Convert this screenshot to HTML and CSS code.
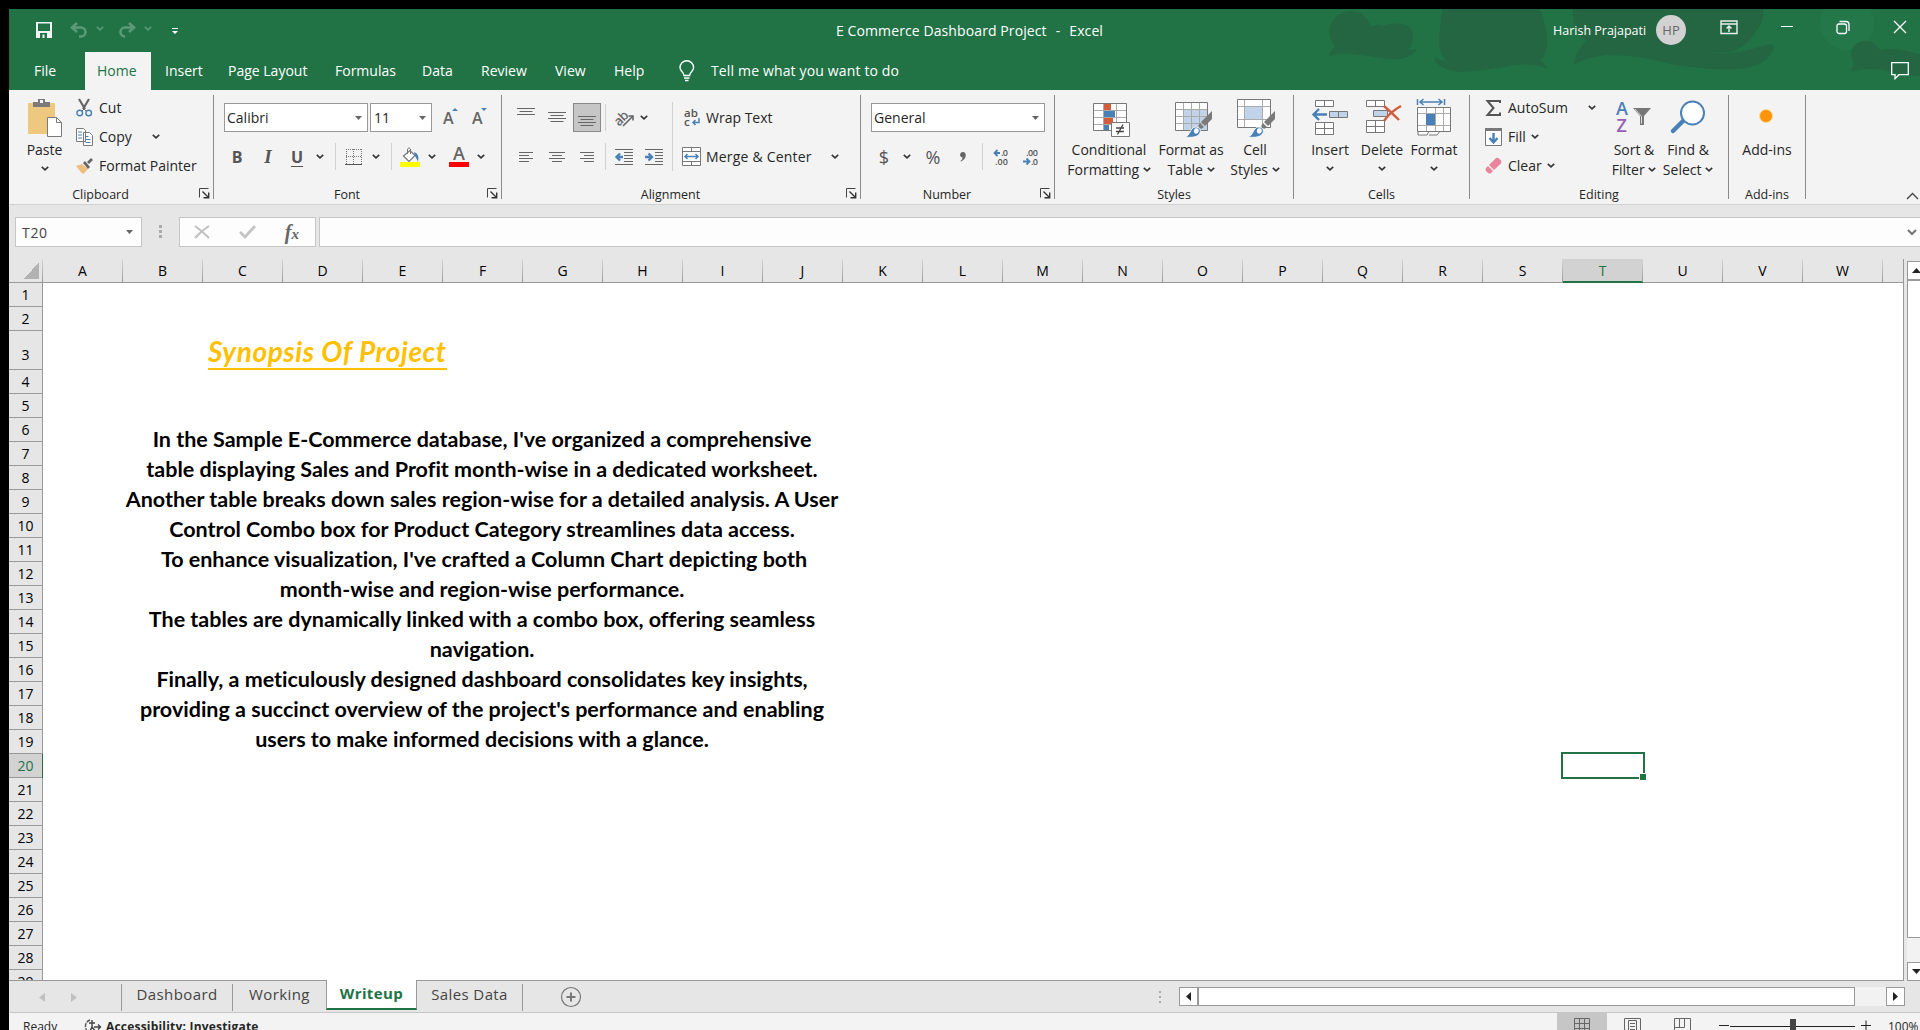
FILE: index.html
```html
<!DOCTYPE html>
<html lang="en">
<head>
<meta charset="utf-8">
<title>E Commerce Dashboard Project - Excel</title>
<link rel="stylesheet" href="styles.css">
</head>
<body>
<svg class="defs" width="0" height="0">
  <symbol id="chev" viewBox="0 0 8 5"><path d="M.8.8 4 3.8 7.2.8" fill="none" stroke="currentColor" stroke-width="1.6"/></symbol>
  <symbol id="tri" viewBox="0 0 7 4"><path d="M0 0h7L3.5 4z" fill="currentColor"/></symbol>
  <symbol id="launch" viewBox="0 0 11 11"><path d="M.5 9.500V.5H9.500" fill="none" stroke="#444"/><path d="M3.500 3.500 9 9M9.700 4.500v5.200H4.500" fill="none" stroke="#333" stroke-width="1.400"/></symbol>
  <symbol id="brush" viewBox="0 0 28 28"><path d="M28 1v8l-7 7-4-4z" fill="#7a7a7a"/><path d="M16 13l4 4-3 2-3-3z" fill="#7a7a7a"/><path d="M1 27c5-1 5-9 10-10 5 0 6 3 5 6-2 4-8 5-15 4z" fill="#4a80b8" stroke="#f3f3f3"/><path d="M11 18.500c3-1 4.500 1 3.500 3.500-1 2-3 2-4 1s-1-3 .5-4.500z" fill="#fff"/></symbol>
</svg>
<div class="app">
  <div class="top">
  <svg class="art" width="620" height="81" viewBox="0 0 620 81">
    <circle cx="547" cy="14" r="27" fill="#237749"/>
    <g fill="#246641">
      <path d="M29 48Q30 42 35 38Q24 22 34 10Q45-2 60 4Q68 9 71 18Q76 14 84 17Q95 12 106 16Q114 20 113 30Q112 37 108 41L117 40Q112 51 90 50L60 46Q38 42 29 48z"/>
      <path d="M142 0H240Q248 20 247 36Q246 46 240 52Q246 54 247 60Q236 54 215 56Q185 62 160 63Q137 60 134 49Q140 50 146 52Q136 40 140 20z"/>
      <path d="M273 0H463Q465 12 455 24Q447 38 430 43Q455 40 462 37Q474 33 474 38Q470 56 440 60Q410 62 370 55Q340 46 305 46Q285 49 274 56Q275 42 286 32Q275 25 273 10z"/>
      <path d="M551 63Q552 58 554 55Q548 42 556 35Q566 28 576 36L580 41Q594 38 606 42L620 45V67Q600 66 585 61Q565 58 551 63z"/>
    </g>
    <path d="M411 43q25 4 52-7" stroke="#23704a" fill="none"/>
  </svg>
  <header class="title-bar">
    <div class="qat">
      <svg width="16" height="16" viewBox="0 0 16 16"><path d="M0 0h16v16H0zM2 1.500V9h12V1.500zM4 11v5h2.500v-3.500h2V16H11v-5z" fill="#f0f5f2" fill-rule="evenodd"/></svg>
      <svg width="18" height="16" viewBox="0 0 18 16"><path d="M7 1 2 5.500 7 10M2 5.500h9a4.500 4.500 0 0 1 0 9H9" fill="none" stroke="#5c9a77" stroke-width="2.600"/></svg>
      <svg class="dim" width="8" height="5"><use href="#chev"/></svg>
      <svg width="18" height="16" viewBox="0 0 18 16"><path d="M11 1 16 5.500 11 10M16 5.500H7a4.500 4.500 0 0 0 0 9" fill="none" stroke="#5c9a77" stroke-width="2.600"/></svg>
      <svg class="dim" width="8" height="5"><use href="#chev"/></svg>
      <svg class="more" width="6" height="6" viewBox="0 0 6 6"><path d="M0 0h6v1H0zM0 3h6L3 6z" fill="#fff"/></svg>
    </div>
    <div class="doc-title"><span>E Commerce Dashboard Project&nbsp; <i>-</i>&nbsp; Excel</span></div>
    <div class="account"><span>Harish Prajapati</span></div>
    <div class="avatar">HP</div>
    <div class="win-controls">
      <svg width="18" height="15" viewBox="0 0 18 15" fill="none" stroke="#e8f2ec" stroke-width="1.400"><path d="M1 1h16v12.500H1zM1 4h16M9 12V6M6.500 8.500 9 6l2.500 2.500"/></svg>
      <svg width="12" height="15" viewBox="0 0 12 15"><path d="M0 6.500h12" stroke="#fff"/></svg>
      <svg width="14" height="15" viewBox="0 0 14 15" fill="none" stroke="#fff" stroke-width="1.300"><rect x="1" y="4" width="9.500" height="9.500" rx="2"/><path d="M3.500 1.500H10a3 3 0 0 1 3 3V11"/></svg>
      <svg width="14" height="15" viewBox="0 0 14 15"><path d="M1 1l12 12M13 1 1 13" stroke="#fff" stroke-width="1.300"/></svg>
    </div>
  </header>
  <nav class="tabs">
    <span>File</span><span class="active">Home</span><span>Insert</span><span>Page Layout</span><span>Formulas</span><span>Data</span><span>Review</span><span>View</span><span>Help</span>
    <svg width="16" height="22" viewBox="0 0 16 22" fill="none" stroke="#fff" stroke-width="1.400"><path d="M5 15.500C5 12 1 11.500 1 7.500a6.700 6.700 0 0 1 13.600 0c0 4-4 4.500-4 8zM5 18h5.500M6 20.500h3.500"/></svg>
    <span class="tell">Tell me what you want to do</span>
    <svg class="comment" width="18" height="18" viewBox="0 0 18 18"><path d="M.7.700h16.600v12H8l-4 4v-4H.7z" fill="none" stroke="#fff" stroke-width="1.300"/></svg>
  </nav>
  </div>

  <section class="ribbon">
    <div class="group clipboard">
      <div class="body">
        <div class="big">
          <svg width="36" height="40" viewBox="0 0 36 40"><rect x="1" y="5" width="27" height="31" rx="1" fill="#edc87e"/><path d="M6 4h5V1h7v3h5v5H6z" fill="#7a7a7a"/><rect x="13" y="2" width="3" height="3" fill="#f3f3f3"/><path d="M20.500 19.500h9l5 5v14h-14z" fill="#fff" stroke="#7a7a7a"/><path d="M29.500 19.500v5h5" fill="none" stroke="#7a7a7a"/></svg>
          <span>Paste</span>
          <svg class="chev solo" width="8" height="5"><use href="#chev"/></svg>
        </div>
        <div class="small-list">
          <div><svg width="17" height="18" viewBox="0 0 17 18"><path d="M3 0l6 10M13 0 7 10" stroke="#666" stroke-width="2.200"/><circle cx="3.700" cy="14" r="2.800" fill="none" stroke="#4a80b8" stroke-width="1.400"/><circle cx="12.700" cy="14" r="2.800" fill="none" stroke="#4a80b8" stroke-width="1.400"/><path d="M6 12l2-2 2 2" stroke="#666" fill="none"/></svg><span>Cut</span></div>
          <div><svg width="17" height="18" viewBox="0 0 17 18"><path d="M.5.500h7l2 2v11h-9zM7.500 4.500h6l3 3v10h-9z" fill="#fff" stroke="#7a7a7a"/><path d="M2 4h4M2 7h4M2 10h4M9.500 8.500h3M9.500 11.500h5M9.500 14.500h5" stroke="#4a80b8"/></svg><span>Copy</span><svg class="chev copy-chev" width="8" height="5"><use href="#chev"/></svg></div>
          <div><svg width="17" height="16" viewBox="0 0 17 16"><path d="M0 8l6-2 6 5-4 4.500-2 0z" fill="#edc080"/><path d="M7 5l2-2 5 6-2 2z" fill="#666"/><path d="M11 4l4-4 2 2-4 4z" fill="#666"/></svg><span>Format Painter</span></div>
        </div>
      </div>
      <div class="label"><span>Clipboard</span><svg width="11" height="11"><use href="#launch"/></svg></div>
    </div>

    <div class="group font">
      <div class="body rows">
        <div class="row1"><div class="combo name"><span>Calibri</span><svg width="7" height="4"><use href="#tri"/></svg></div><div class="combo size"><span>11</span><svg width="7" height="4"><use href="#tri"/></svg></div>
          <div class="grow"><span class="ga">A</span><svg width="6" height="3" viewBox="0 0 6 3"><path d="M0 3l3-3 3 3z" fill="#4a80b8"/></svg></div>
          <div class="grow shrink"><span class="ga">A</span><svg width="6" height="3" viewBox="0 0 6 3"><path d="M0 0h6L3 3z" fill="#4a80b8"/></svg></div></div>
        <div class="row2">
          <b class="glyph">B</b><i class="glyph it">I</i><b class="glyph un">U</b><svg class="chev" width="8" height="5"><use href="#chev"/></svg><i class="sep"></i>
          <svg width="18" height="18" viewBox="0 0 18 18"><path d="M1 1.500h16M1 8.500h16M1.500 1v16M8.500 1v16M16.500 1v16" stroke="#777" stroke-dasharray="1 1"/><path d="M0 16.500h17" stroke="#555"/></svg>
          <svg class="chev" width="8" height="5"><use href="#chev"/></svg><i class="sep"></i>
          <svg width="20" height="20" viewBox="0 0 20 20"><path d="M3.500 9 10 3.500l5 5-6 6z" fill="#fff" stroke="#777" stroke-width="1.200"/><path d="M7.500 7V2q1.500-2.500 3 0v5" fill="none" stroke="#777"/><path d="M14 5q6 2 4 9.500L15 9z" fill="#4a80b8"/><path d="M0 15h20v5H0z" fill="#ff0"/></svg>
          <svg class="chev" width="8" height="5"><use href="#chev"/></svg>
          <div class="fc">A</div>
          <svg class="chev" width="8" height="5"><use href="#chev"/></svg>
        </div>
      </div>
      <div class="label"><span>Font</span><svg width="11" height="11"><use href="#launch"/></svg></div>
    </div>

    <div class="group align">
      <div class="body">
        <div class="rows">
          <div class="row1 lines">
            <svg width="18" height="29"><path d="M0 5.500h18M2.500 8.500h13M0 11.500h18" /></svg>
            <svg width="18" height="29"><path d="M0 9.500h18M2.500 12.500h13M0 15.500h18M2.500 18.500h13"/></svg>
            <div class="pressed"><svg width="18" height="27"><path d="M0 12.500h18M2.500 15.500h13M0 18.500h18M2.500 21.500h13"/></svg></div>
            <i class="sep"></i>
            <svg width="20" height="20" viewBox="0 0 20 20"><text x="0" y="15" class="ab" transform="rotate(-45 7 11)">ab</text><path d="M9 18 18.500 8.500M14.500 8h4.500v4.500" style="stroke-width:1.600"/></svg>
            <svg class="chev" width="8" height="5"><use href="#chev"/></svg>
          </div>
          <div class="row2 lines">
            <svg width="14" height="12"><path d="M0 1.500h14M0 4.500h10M0 7.500h14M0 10.500h10"/></svg>
            <svg width="16" height="12"><path d="M0 1.500h16M3 4.500h10M0 7.500h16M3 10.500h10"/></svg>
            <svg width="14" height="12"><path d="M0 1.500h14M4 4.500h10M0 7.500h14M4 10.500h10"/></svg>
            <i class="sep"></i>
            <svg width="18" height="16"><path d="M0 .5h18M9 3.500h9M9 6.500h9M9 9.500h9M9 12.500h9M0 15.500h18"/><path d="M8 8H1.500M5 4.500 1.500 8 5 11.500" style="stroke:#4a80b8;stroke-width:2.400"/></svg>
            <svg width="18" height="16"><path d="M0 .5h18M10 3.500h8M10 6.500h8M10 9.500h8M10 12.500h8M0 15.500h18"/><path d="M0 8h6.500M3.500 4.500 7 8 3.500 11.500" style="stroke:#4a80b8;stroke-width:2.400"/></svg>
          </div>
        </div>
        <i class="tall-sep"></i>
        <div class="rows wrap">
          <div><svg width="19" height="19" viewBox="0 0 19 19"><text x="2" y="9" class="abc">ab</text><text x="2" y="18" class="abc">c</text><path d="M17 10v4.500H11M13.500 12 11 14.500l2.500 2.500" fill="none" stroke="#4a80b8" stroke-width="1.500"/></svg><span>Wrap Text</span></div>
          <div><svg width="19" height="19" viewBox="0 0 19 19"><path d="M.5.500h18v18H.5zM.5 4.500h18M.5 14.500h18M9.500.500v4M9.500 14.500v4" fill="#fff" stroke="#777"/><path d="M3 9.500h13M5.500 7 3 9.500 5.500 12M13.500 7 16 9.500 13.500 12" fill="none" stroke="#4a80b8" stroke-width="1.500"/></svg><span class="merge">Merge &amp; Center</span><svg class="chev mc" width="8" height="5"><use href="#chev"/></svg></div>
        </div>
      </div>
      <div class="label"><span>Alignment</span><svg width="11" height="11"><use href="#launch"/></svg></div>
    </div>

    <div class="group number">
      <div class="body rows">
        <div class="row1"><div class="combo fmt"><span>General</span><svg width="7" height="4"><use href="#tri"/></svg></div></div>
        <div class="row2">
          <span class="sym">$</span><svg class="chev" width="8" height="5"><use href="#chev"/></svg><span class="sym pct">%</span>
          <svg width="6" height="10" viewBox="0 0 6 10"><path d="M3 0c4 0 4 7-2 9.500L.5 9Q3 7 2.500 5.500C-1 5-.5 0 3 0z" fill="#666"/></svg><i class="sep"></i>
          <svg width="16" height="18" viewBox="0 0 16 18"><path d="M7 5H2M4.500 2 1.500 5l3 3" fill="none" stroke="#4a80b8" stroke-width="1.800"/><text x="8" y="8" class="dec" textLength="7">.0</text><text x="2" y="17" class="dec" textLength="13">.00</text></svg>
          <svg width="16" height="18" viewBox="0 0 16 18"><text x="3" y="8" class="dec" textLength="12">.00</text><text x="8" y="17" class="dec" textLength="7">.0</text><path d="M0 13.500h6M3.500 10.500l3 3-3 3" fill="none" stroke="#4a80b8" stroke-width="1.800"/></svg>
        </div>
      </div>
      <div class="label"><span>Number</span><svg width="11" height="11"><use href="#launch"/></svg></div>
    </div>

    <div class="group styles">
      <div class="body">
        <div class="big">
          <svg width="38" height="40" viewBox="0 0 38 40"><g transform="translate(3 0)"><path d="M.5 5.500h33v27H.5z" fill="#fff" stroke="#777"/><path d="M1 12.500h32M1 19.500h32M1 26.500h32M10.500 6v26M23.500 6v26" stroke="#aaa"/><path d="M11 6h7v6h-7zM11 20h9v6h-9z" fill="#d35c3c"/><path d="M11 13h11v6H11zM11 27h5v5h-5z" fill="#4a80b8"/><path d="M18.500 24.500h18v14h-18z" fill="#fff" stroke="#777"/><path d="M23 30h8M23 33.500h8M30 26.500l-5.500 10" stroke="#444" stroke-width="1.300"/></g></svg>
          <span>Conditional</span><span>Formatting <svg class="chev" width="8" height="5"><use href="#chev"/></svg></span>
        </div>
        <div class="big">
          <svg width="38" height="40" viewBox="0 0 38 40"><g transform="translate(2 0)"><path d="M1.500 4.500h32v28h-32z" fill="#fff" stroke="#777"/><path d="M9 11h24v21H9z" fill="#c0d3e9"/><path d="M2 11.500h31M2 18.500h31M2 25.500h31M9.500 5v27M17.500 5v27M25.500 5v27" stroke="#aaa"/><use href="#brush" x="10" y="12" width="28" height="28"/></g></svg>
          <span>Format as</span><span>Table <svg class="chev" width="8" height="5"><use href="#chev"/></svg></span>
        </div>
        <div class="big">
          <svg width="38" height="40" viewBox="0 0 38 40"><g transform="translate(1 0)"><path d="M.5 1.500h33v28H.5z" fill="#fff" stroke="#777"/><path d="M8 9h17v12H8z" fill="#c0d3e9"/><path d="M1 8.500h32M1 21.500h32M7.500 2v27M25.500 2v27" stroke="#aaa"/><use href="#brush" x="10" y="12" width="28" height="28"/></g></svg>
          <span>Cell</span><span>Styles <svg class="chev" width="8" height="5"><use href="#chev"/></svg></span>
        </div>
      </div>
      <div class="label"><span>Styles</span></div>
    </div>

    <div class="group cells">
      <div class="body">
        <div class="big">
          <svg width="38" height="40" viewBox="0 0 38 40"><path d="M4.500 2.500h18v6h-18zM13.500 2.500v6M4.500 24.500h18v12h-18zM13.500 24.500v12M4.500 30.500h18" fill="#fff" stroke="#777"/><path d="M18.500 13.500h18v6h-18zM27.500 13.500v6" fill="#c0d3e9" stroke="#777"/><path d="M16 16.500H3M8 11 2.500 16.500 8 22" fill="none" stroke="#4a80b8" stroke-width="2.400"/></svg>
          <span>Insert</span><svg class="chev solo" width="8" height="5"><use href="#chev"/></svg>
        </div>
        <div class="big">
          <svg width="38" height="40" viewBox="0 0 38 40"><path d="M3.500 2.500h18v6h-18zM12.500 2.500v6M3.500 22.500h18v12h-18zM12.500 22.500v12M3.500 28.500h18" fill="#fff" stroke="#777"/><path d="M10.500 12.500h14v6h-14z" fill="#c0d3e9" stroke="#777"/><path d="M21 8q8 7 15 14M38 8Q27 14 21 23" fill="none" stroke="#d35c3c" stroke-width="2.400"/></svg>
          <span>Delete</span><svg class="chev solo" width="8" height="5"><use href="#chev"/></svg>
        </div>
        <div class="big">
          <svg width="38" height="40" viewBox="0 0 38 40"><path d="M2.500 9.500h33v24h-33zM3 33v4h9l2-4M14 37h8l3-4" fill="#fff" stroke="#777"/><path d="M3 15.500h32M3 27.500h32M11.500 10v23M20.500 10v23M28.500 10v23" stroke="#aaa"/><path d="M11 16h9v11h-9z" fill="#4a80b8"/><path d="M2.500 1v6M29.500 1v6M5 4h22M8.500 1 5 4l3.500 3M23.500 1 27 4l-3.500 3" fill="none" stroke="#4a80b8" stroke-width="1.500"/></svg>
          <span>Format</span><svg class="chev solo" width="8" height="5"><use href="#chev"/></svg>
        </div>
      </div>
      <div class="label"><span>Cells</span></div>
    </div>

    <div class="group editing">
      <div class="body">
        <div class="small-list">
          <div><svg width="17" height="18" viewBox="0 0 17 18"><path d="M15 4V2H2.500l6 7-6 7H15v-2.500" fill="none" stroke="#555" stroke-width="2"/></svg><span>AutoSum</span><svg class="chev sum-chev" width="8" height="5"><use href="#chev"/></svg></div>
          <div><svg width="17" height="18" viewBox="0 0 17 18"><path d="M.5.500h16v17H.5z" fill="#fff" stroke="#777"/><path d="M0 0h17v3H0z" fill="#777"/><path d="M8.500 5v9M4.500 10l4 4.500 4-4.500" fill="none" stroke="#4a80b8" stroke-width="2.400"/></svg><span>Fill</span><svg class="chev near" width="8" height="5"><use href="#chev"/></svg></div>
          <div><svg width="17" height="17" viewBox="0 0 17 17"><path d="M11 1q2-1 3.500 1l1.500 1.500q1 1.500 0 3l-7 6.500-5-5z" fill="#e8859a"/><path d="M3 9l5 5-2 2q-1.500 1-3 0l-2-2q-1-1.500 0-3z" fill="#e8859a"/></svg><span>Clear</span><svg class="chev near" width="8" height="5"><use href="#chev"/></svg></div>
        </div>
        <div class="big">
          <svg width="38" height="40" viewBox="0 0 38 40"><text x="1" y="17" class="az" fill="#4a80b8">A</text><text x="1.500" y="34" class="az" fill="#9560b5">Z</text><path d="M18 10h18l-7 8v9h-4v-9z" fill="#777"/><path d="M20 11l6.500 7.500v7" fill="none" stroke="#ddd"/></svg>
          <span>Sort &amp;</span><span>Filter <svg class="chev" width="8" height="5"><use href="#chev"/></svg></span>
        </div>
        <div class="big">
          <svg width="38" height="40" viewBox="0 0 38 40"><path d="M15 22 4 33" stroke="#4a80b8" stroke-width="4.500" stroke-linecap="round"/><circle cx="23.500" cy="15" r="11.500" fill="#fff" stroke="#4a80b8" stroke-width="2"/></svg>
          <span>Find &amp;</span><span>Select <svg class="chev" width="8" height="5"><use href="#chev"/></svg></span>
        </div>
      </div>
      <div class="label"><span>Editing</span></div>
    </div>

    <div class="group addins">
      <div class="body"><div class="big"><svg width="38" height="40" viewBox="0 0 38 40"><circle cx="18" cy="18" r="6.500" fill="#ff9408" stroke="#fbd9a6"/></svg><span>Add-ins</span></div></div>
      <div class="label"><span>Add-ins</span></div>
    </div>
    <svg class="collapse" width="13" height="8" viewBox="0 0 13 8"><path d="M1 7l5.500-5.500L12 7" fill="none" stroke="#444" stroke-width="1.400"/></svg>
  </section>

  <section class="formula-bar">
    <div class="name-box"><span>T20</span><svg width="7" height="4"><use href="#tri"/></svg></div>
    <svg class="dots" width="3" height="14"><path d="M0 0h3v3H0zM0 5h3v3H0zM0 10h3v3H0z" fill="#aaa"/></svg>
    <div class="fx">
      <svg width="16" height="14" viewBox="0 0 16 14"><path d="M1 1q7 5 14 12M15 1Q7 6 1 13" fill="none" stroke="#c0c0c0" stroke-width="2"/></svg>
      <svg width="17" height="14" viewBox="0 0 17 14"><path d="M1 7l5 5L16 1" fill="none" stroke="#c4c4c4" stroke-width="2.800"/></svg>
      <span class="fx-glyph">f<small>x</small></span>
    </div>
    <div class="input"><svg width="10" height="6" viewBox="0 0 10 6"><path d="M1 1l4 4 4-4" fill="none" stroke="#777" stroke-width="2.200"/></svg></div>
  </section>

  <section class="sheet">
    <div class="grid">
      <div class="cols"><i class="corner"></i><span>A</span><span>B</span><span>C</span><span>D</span><span>E</span><span>F</span><span>G</span><span>H</span><span>I</span><span>J</span><span>K</span><span>L</span><span>M</span><span>N</span><span>O</span><span>P</span><span>Q</span><span>R</span><span>S</span><span class="sel">T</span><span>U</span><span>V</span><span>W</span></div>
      <div class="main">
        <div class="row-heads"><span>1</span><span>2</span><span class="r3">3</span><span>4</span><span>5</span><span>6</span><span>7</span><span>8</span><span>9</span><span>10</span><span>11</span><span>12</span><span>13</span><span>14</span><span>15</span><span>16</span><span>17</span><span>18</span><span>19</span><span class="sel">20</span><span>21</span><span>22</span><span>23</span><span>24</span><span>25</span><span>26</span><span>27</span><span>28</span><span>29</span></div>
        <div class="cells-area">
          <h1><span>Synopsis Of Project</span></h1>
          <div class="writeup">
            <p>In the Sample E-Commerce database, I've organized a comprehensive</p>
            <p>table displaying Sales and Profit month-wise in a dedicated worksheet.</p>
            <p>Another table breaks down sales region-wise for a detailed analysis. A User</p>
            <p>Control Combo box for Product Category streamlines data access.</p>
            <p class="shift">To enhance visualization, I've crafted a Column Chart depicting both</p>
            <p>month-wise and region-wise performance.</p>
            <p>The tables are dynamically linked with a combo box, offering seamless</p>
            <p>navigation.</p>
            <p>Finally, a meticulously designed dashboard consolidates key insights,</p>
            <p>providing a succinct overview of the project's performance and enabling</p>
            <p>users to make informed decisions with a glance.</p>
          </div>
          <div class="cursor"></div>
        </div>
      </div>
    </div>
    <div class="vscroll"><div class="btn"><svg width="9" height="5" viewBox="0 0 9 5"><path d="M0 5h9L4.500 0z" fill="#222"/></svg></div><div class="thumb"></div><div class="track"></div><div class="btn"><svg width="9" height="5" viewBox="0 0 9 5"><path d="M0 0h9L4.500 5z" fill="#222"/></svg></div></div>
  </section>

  <section class="sheet-tabs">
    <div class="nav"><svg width="6" height="9" viewBox="0 0 6 9"><path d="M6 0v9L0 4.500z" fill="#c0c0c0"/></svg><svg width="6" height="9" viewBox="0 0 6 9"><path d="M0 0v9l6-4.500z" fill="#c0c0c0"/></svg></div>
    <div class="tab t1"><span>Dashboard</span></div><div class="tab t2"><span>Working</span></div><div class="tab t3"><span>Writeup</span></div><div class="tab t4"><span>Sales Data</span></div>
    <svg class="plus" width="22" height="22" viewBox="0 0 22 22"><circle cx="11" cy="11" r="9.500" fill="none" stroke="#777" stroke-width="1.200"/><path d="M11 6.500v9M6.500 11h9" stroke="#777" stroke-width="2"/></svg>
    <svg class="dots" width="3" height="14"><path d="M0 0h2v2H0zM0 5h2v2H0zM0 10h2v2H0z" fill="#aaa"/></svg>
    <div class="hscroll"><div class="btn"><svg width="5" height="9" viewBox="0 0 5 9"><path d="M5 0v9L0 4.500z" fill="#222"/></svg></div><div class="thumb"></div><div class="track"></div><div class="btn"><svg width="5" height="9" viewBox="0 0 5 9"><path d="M0 0v9l5-4.500z" fill="#222"/></svg></div></div>
  </section>

  <footer class="status">
    <span class="ready">Ready</span>
    <svg class="acc" width="18" height="16" viewBox="0 0 18 16"><path d="M6 1Q1 3 1.500 8t5 6" fill="none" stroke="#555" stroke-width="1.400" stroke-dasharray="4 1"/><path d="M8 1v7M5 4h6M8 8l-2 4M8 8l4 5M10 8h6M14 5.500l2.500 2.500-2.500 2.500" fill="none" stroke="#444" stroke-width="1.400"/></svg>
    <span class="access">Accessibility: Investigate</span>
    <div class="views">
      <div class="on"><svg width="16" height="14" viewBox="0 0 16 14"><path d="M.5.500h15v14M.5.500v14M.5 5.500h15M.5 10.500h15M5.500.500v14M10.500.500v14" fill="none" stroke="#666"/></svg></div>
      <div><svg width="17" height="14" viewBox="0 0 17 14"><path d="M.5 14V.500h16V14M4.500 14V2.500h8V14M6 5.500h5M6 8.500h5M6 11.500h5" fill="none" stroke="#666"/></svg></div>
      <div><svg width="17" height="14" viewBox="0 0 17 14"><path d="M.5 14V.500h16V14M.5 9.500h10V.500M5.500.500v9" fill="none" stroke="#666"/></svg></div>
    </div>
    <svg class="zoomer" width="158" height="14" viewBox="0 0 158 14"><path d="M0 6.500h10M11 7.500h125M142 6.500h10M147 1.500v10" stroke="#222"/><path d="M71 0h6v14h-6z" fill="#444"/></svg>
    <span class="pct100">100%</span>
  </footer>
</div>
</body>
</html>
```
FILE: styles.css
```css
* { box-sizing: border-box; }
body {
  margin: 0;
  background: #000;
  overflow: hidden;
  font-family: "Open Sans", "Noto Sans", sans-serif;
  font-size: 14px;
  color: #262626;
}
svg { display: block; flex: none; overflow: visible; }
.defs { position: absolute; }
span { white-space: nowrap; }

.app {
  margin: 9px 0 0 9px;
  width: 1911px;
  height: 1021px;
  overflow: hidden;
  display: flex;
  flex-direction: column;
  background: #e6e6e6;
}
.app > * { flex: none; }

/* title bar */
.top { position: relative; background: #217346; color: #fff; }
.art { position: absolute; right: 0; top: 0; overflow: hidden; }
.title-bar {
  position: relative;
  height: 43px;
  display: grid;
  grid-template-columns: 827px 717px 103px 64px 200px;
}
.title-bar > div { display: flex; height: 42px; align-items: center; }
.qat { padding-left: 27px; }
.qat svg:nth-child(2) { margin-left: 18px; }
.qat svg:nth-child(3) { margin-left: 8px; margin-top: -3px; }
.qat svg:nth-child(4) { margin-left: 14px; }
.qat svg:nth-child(5) { margin-left: 8px; margin-top: -3px; }
.qat .more { margin-left: 20px; margin-top: 2px; }
.dim { color: #5c9a77; }
.doc-title { letter-spacing: .1px; }
.doc-title i { font-style: normal; margin: 0 1.5px; }
.account { font-size: 12.5px; }
.title-bar .avatar {
  width: 30px; height: 30px; margin-top: 6px;
  border-radius: 50%;
  background: #d2d2d2; color: #666;
  font-size: 13px;
  justify-content: center;
}
.win-controls { gap: 43px; padding-bottom: 5px; }

.tabs {
  position: relative;
  height: 38px;
  padding-left: 25px;
  display: grid;
  grid-template-columns: 63px 68px 63px 107px 87px 59px 74px 59px 65px 32px 1180px 20px;
  align-items: center;
}
.tabs span { line-height: 38px; height: 38px; margin-top: -1px; }
.tabs .active {
  width: 66px; margin-left: -12px; margin-top: 0; padding-left: 12px;
  line-height: 37px;
  background: #f3f3f3; color: #217346;
}
.tell { letter-spacing: .15px; }

/* ribbon */
.ribbon { height: 115px; background: #f3f3f3; border-bottom: 1px solid #d0d0d0; display: flex; }
.group {
  height: 104px; margin-top: 5px;
  border-right: 1px solid #8a8a8a;
  display: flex; flex-direction: column;
}
.clipboard { width: 205px; }
.font { width: 288px; }
.align { width: 359px; }
.number { width: 194px; }
.styles { width: 239px; }
.cells { width: 176px; }
.editing { width: 259px; }
.addins { width: 77px; }
.collapse { margin: 102px 0 0 100px; }
.body { height: 90px; flex: none; display: flex; }
.body.rows, .rows { flex-direction: column; }
.label { height: 18px; flex: none; display: flex; justify-content: center; align-items: center; font-size: 12.5px; }
.label span { flex: 1; text-align: center; }
.label svg { margin: 0 3px 1px 7px; }
.chev { color: #333; }
.big { display: flex; flex-direction: column; align-items: center; line-height: 20px; }
.big > svg:first-child { margin: 3px 0 2px; }
.big .solo { margin-top: 6px; }
.big span svg { display: inline-block; vertical-align: 3px; }
.clipboard .big { margin-left: 5px; width: 61px; }
.small-list { width: 120px; }
.small-list > div { height: 29px; display: flex; align-items: center; }
.small-list > div > span { margin-left: 6px; }
.clipboard .small-list { margin: -2px 0 0 1px; }
.copy-chev { margin-left: 20px; }

.row1, .row2 { display: grid; align-items: center; justify-items: center; }
.row1 { height: 29px; margin-top: 8px; }
.row2 { height: 29px; margin-top: 10px; }
.combo {
  height: 29px; background: #fff; border: 1px solid #999;
  display: flex; align-items: center; justify-content: space-between;
  padding: 0 5px 0 2px; color: #666;
}
.combo span { color: #262626; }
.name { width: 144px; }
.size { width: 62px; padding-left: 3px; }
.fmt { width: 174px; }
.font .row1 { margin-left: 10px; grid-template-columns: 146px 62px 36px 30px; justify-items: start; }
.grow { display: flex; align-items: flex-start; margin-left: 11px; height: 20px; }
.shrink { margin-left: 4px; }
.ga { font-size: 16px; line-height: 20px; font-weight: 600; color: #666; }
.grow svg { margin-left: -2px; }
.font .row2 { margin-left: 8px; grid-template-columns: 30px 32px 26px 20px 10px 27px 18px 12px 26px 18px 36px 8px; }
.glyph { font-size: 16px; line-height: 20px; font-weight: 700; color: #555; }
.it { font-family: "Liberation Serif", serif; font-size: 19px; }
.un { text-decoration: underline; text-decoration-thickness: 1px; text-underline-offset: 3px; }
.sep { width: 1px; height: 27px; background: #d0d0d0; }
.fc { width: 20px; height: 20px; border-bottom: 5px solid #f00; font-size: 18px; line-height: 13px; text-align: center; font-weight: 600; color: #666; }
.align .body > .rows:first-child { width: 161px; padding-left: 9px; }
.align .row1 { grid-template-columns: 30px 31px 30px 7px 29px 10px; }
.align .row2 { grid-template-columns: 30px 31px 30px 7px 30px 30px; }
.align .row2, .align .row1 { justify-content: start; }
.lines svg path { stroke: #666; fill: none; }
.row1 > .chev { margin-left: 1px; }
.pressed { width: 28px; height: 29px; border: 1px solid #888; background: #c6c6c6; display: flex; justify-content: center; }
.ab { font: 600 13px "Open Sans", sans-serif; fill: #666; letter-spacing: -.5px; }
.abc { font: 600 11.5px "Open Sans", sans-serif; fill: #555; }
.dec { font: 600 9px "Open Sans", sans-serif; fill: #555; }
.az { font: 600 18px "Open Sans", sans-serif; }
.tall-sep { width: 1px; height: 69px; margin: 7px 0 0 9px; background: #d0d0d0; }
.wrap { display: flex; padding: 8px 0 0 9px; gap: 10px; }
.wrap > div { display: flex; align-items: center; height: 29px; }
.wrap span { margin-left: 5px; }
.merge { letter-spacing: .2px; }
.mc { margin-left: 19px; }
.number .row1 { margin-left: 10px; justify-items: start; }
.number .row2 { margin-left: 10px; grid-template-columns: 26px 20px 32px 28px 11px 26px 34px; }
.sym { font-size: 18px; color: #555; }
.styles .body { display: grid; grid-template-columns: 98px 66px 62px; padding-left: 5px; }
.cells .body { display: grid; grid-template-columns: 52px 52px 52px; padding-left: 10px; }
.editing .body { display: grid; grid-template-columns: 122px 54px 54px; padding-left: 15px; }
.editing .small-list { margin-top: -2px; }
.sum-chev { margin-left: 20px; }
.near { margin-left: 5px; }
.addins .body { justify-content: center; }

/* formula bar */
.formula-bar { height: 54px; padding: 12px 0 0 6px; display: flex; }
.name-box, .fx, .input { flex: none; height: 30px; border: 1px solid #c6c6c6; background: #fdfdfd; display: flex; align-items: center; justify-content: space-between; }
.name-box { width: 127px; padding: 0 8px 0 6px; color: #666; }
.name-box span { color: #444; letter-spacing: .7px; }
.formula-bar .dots { margin: 8px 17px 0 17px; }
.fx { width: 137px; padding: 0 16px 0 14px; }
.fx-glyph { font: italic 700 20px "Liberation Serif", serif; color: #666; }
.fx-glyph small { font-size: 15px; }
.input { width: 1610px; margin-left: 3px; justify-content: flex-end; padding-right: 11px; }

/* sheet */
.sheet { height: 722px; display: flex; }
.grid { width: 1895px; flex: none; border-right: 1px solid #999; border-bottom: 1px solid #999; display: flex; flex-direction: column; }
.cols { height: 24px; border-bottom: 1px solid #999; display: flex; color: #000; }
.cols span, .corner { width: 80px; flex: none; border-right: 1px solid; border-image: linear-gradient(#d8d8d8, #999) 1; text-align: center; line-height: 24px; }
.corner { width: 34px; background: linear-gradient(135deg, transparent 50%, #b2b2b2 50%) 14px 4px / 16px 16px no-repeat; }
.cols .sel { background: #d2d2d2; color: #217346; box-shadow: 0 1px #217346, inset 0 -1px #217346; }
.main { display: flex; height: 697px; overflow: hidden; }
.row-heads { width: 34px; flex: none; background: #e6e6e6; border-right: 1px solid #999; color: #000; }
.row-heads span { display: block; height: 24px; border-bottom: 1px solid #999; line-height: 24px; text-align: center; }
.row-heads .r3 { height: 39px; line-height: 48px; }
.row-heads .sel { background: #d2d2d2; color: #217346; box-shadow: 1px 0 #217346; }
.cells-area { position: relative; flex: 1; background: #fff; padding-top: 47px; }
h1 { margin: 0; padding-left: 165px; height: 38px; font: italic 700 28px/42px Lato, sans-serif; letter-spacing: .58px; color: #ffc000; }
h1 span { border-bottom: 2px solid #ffc000; line-height: 1; }
.writeup { width: 720px; margin: 56px 0 0 79px; font: 700 21.5px/30px Lato, sans-serif; font-variant-ligatures: none; color: #000; }
.writeup p { margin: 0; height: 30px; display: flex; justify-content: center; white-space: nowrap; }
.writeup .shift { padding-left: 4px; }
.cursor { position: absolute; left: 1518px; top: 469px; width: 84px; height: 27px; border: 2px solid #217346; }
.cursor::after { content: ""; position: absolute; right: -3px; bottom: -3px; width: 6px; height: 6px; background: #217346; border: 1px solid #fff; border-width: 1px 0 0 1px; }
.vscroll { width: 19px; margin: 2px 0 0 3px; display: flex; flex-direction: column; flex: none; }
.btn, .thumb { flex: none; background: #fff; border: 1px solid #999; display: flex; align-items: center; justify-content: center; }
.vscroll .btn { height: 19px; width: 19px; }
.vscroll .thumb { width: 19px; height: 658px; }
.vscroll .track { flex: 1; background: #f2f2f2; }

/* sheet tabs */
.sheet-tabs { height: 32px; border-bottom: 1px solid #c6c6c6; display: flex; color: #444; font-size: 15px; letter-spacing: .4px; }
.nav { width: 112px; display: flex; gap: 26px; padding: 12px 0 0 30px; }
.tab { height: 27px; margin-top: 3px; padding-bottom: 7px; border-right: 1px solid #999; display: flex; justify-content: center; align-items: center; }
.t1 { width: 112px; border-left: 1px solid #999; }
.t2 { width: 93px; border-right: 0; }
.t3 { width: 91px; height: 30px; margin-top: -1px; padding-bottom: 2px; background: #fff; color: #217346; font-weight: 700; border: 1px solid #999; border-top: 0; border-bottom: 2px solid #217346; }
.t4 { width: 106px; }
.plus { margin: 5px 0 0 37px; }
.sheet-tabs .dots { margin: 10px 17px 0 577px; }
.hscroll { display: flex; margin-top: 6px; height: 19px; }
.hscroll .btn { width: 19px; }
.hscroll .thumb { width: 657px; }
.hscroll .track { width: 31px; background: #f2f2f2; }

/* status bar */
.status { height: 18px; background: #f3f3f3; display: flex; font-size: 12px; line-height: 27px; }
.status > * { flex: none; }
.ready { width: 75px; padding-left: 14px; }
.acc { margin-top: 6px; }
.access { width: 1455px; padding-left: 4px; font-weight: 700; letter-spacing: .2px; }
.views { display: flex; width: 162px; }
.views div { width: 50px; height: 18px; padding-top: 5px; display: flex; justify-content: center; }
.views .on { background: #c6c6c6; }
.zoomer { margin-top: 6px; }
.pct100 { margin-left: 11px; }
```
